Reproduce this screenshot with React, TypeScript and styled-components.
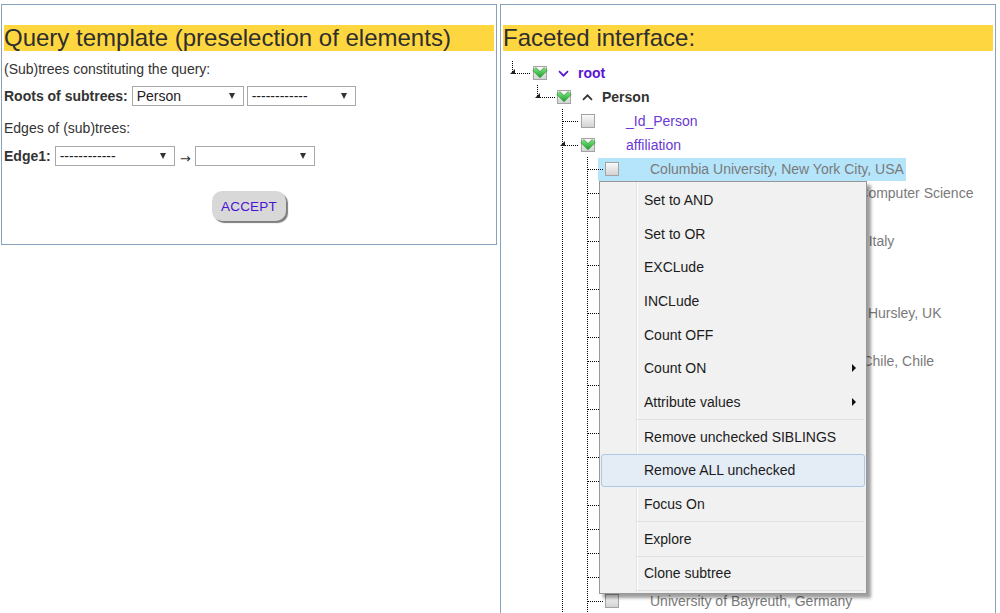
import React from "react";
import styled, { createGlobalStyle } from "styled-components";

const GlobalStyle = createGlobalStyle`
  html, body {
    margin: 0;
    padding: 0;
    overflow: hidden;
    background: #fff;
    font-family: "Liberation Sans", Arial, sans-serif;
  }
`;

const Page = styled.div`
  display: flex;
  align-items: flex-start;
  gap: 3px;
  padding: 4px 0 0 1px;
  width: 1000px;
  height: 613px;
  box-sizing: border-box;
  overflow: hidden;
`;

const Panel = styled.section<{ $h: number }>`
  position: relative;
  flex: none;
  width: 496px;
  height: ${(p) => p.$h}px;
  box-sizing: border-box;
  border: 1px solid #86a3bb;
  padding: 0 2px;
  color: #333;
  font-size: 14px;
`;

const Heading = styled.h2`
  margin: 20px 0 0;
  height: 26px;
  line-height: 26px;
  background: #fed63f;
  color: #2e2e2e;
  font-size: 24px;
  font-weight: normal;
  white-space: nowrap;
`;

const Para = styled.p<{ $mt: number }>`
  margin: ${(p) => p.$mt}px 0 0;
  line-height: 18px;
  font-size: 14px;
  color: #333;
`;

const FormRow = styled.div<{ $mt: number }>`
  display: flex;
  align-items: center;
  height: 20px;
  margin-top: ${(p) => p.$mt}px;
`;

const FieldLabel = styled.span`
  font-weight: bold;
  color: #333;
  margin-right: 4px;
  white-space: nowrap;
`;

const FakeSelect = styled.div<{ $w: number }>`
  display: flex;
  align-items: center;
  justify-content: space-between;
  box-sizing: border-box;
  width: ${(p) => p.$w}px;
  height: 20px;
  border: 1px solid #a9a9a9;
  padding: 0 8px 0 4px;
  margin-right: 3px;
  background: #fff;
  color: #222;
  font-size: 14px;
`;

const DownTriangle = styled.span`
  width: 0;
  height: 0;
  border-left: 3.5px solid transparent;
  border-right: 3.5px solid transparent;
  border-top: 6px solid #333;
`;

const EdgeArrow = styled.span`
  margin: 4px 4px 0 2px;
  font-family: "DejaVu Sans", sans-serif;
  font-size: 13px;
  color: #333;
`;

const ButtonRow = styled.div`
  display: flex;
  justify-content: center;
  margin-top: 25px;
`;

const AcceptButton = styled.button`
  width: 74px;
  height: 30px;
  border: none;
  border-radius: 10px;
  background: #d8d8d8;
  box-shadow: 2px 2px 1px #7d7d7d;
  color: #4a12d4;
  font-family: "Liberation Sans", Arial, sans-serif;
  font-size: 13.5px;
  letter-spacing: 0.2px;
  padding: 0;
`;

/* ---------- tree ---------- */

const Tree = styled.ul`
  margin: 10px 0 0;
  padding: 0 0 0 9px;
  list-style: none;
`;

const Children = styled.ul`
  margin: 0;
  padding: 0 0 0 25px;
  list-style: none;
`;

const Item = styled.li<{ $last: boolean }>`
  background-image: repeating-linear-gradient(to bottom, #000 0 1px, transparent 1px 2px);
  background-repeat: no-repeat;
  background-size: 1px ${(p) => (p.$last ? "12px" : "100%")};
  background-position: 0 0;
`;

const Row = styled.div`
  display: flex;
  align-items: center;
  height: 24px;
`;

const Connector = styled.span<{ $w: number }>`
  position: relative;
  flex: none;
  width: ${(p) => p.$w}px;
  height: 24px;
  background-image: repeating-linear-gradient(to right, #000 0 1px, transparent 1px 2px);
  background-repeat: no-repeat;
  background-size: ${(p) => p.$w - 2}px 1px;
  background-position: 1px 12px;
`;

const Expander = styled.span`
  position: absolute;
  left: -2px;
  top: 8px;
  width: 0;
  height: 0;
  border-style: solid;
  border-width: 0 0 5px 5px;
  border-color: transparent transparent #222 transparent;
`;

const NodeBody = styled.span<{ $active?: boolean }>`
  display: flex;
  align-items: center;
  height: 23px;
  margin-left: -6px;
  padding: 0 2px 0 6px;
  background: ${(p) => (p.$active ? "#b5e5fa" : "transparent")};
`;

const ChevronSlot = styled.span`
  flex: none;
  display: flex;
  align-items: center;
  width: 11px;
  margin: 0 9px 0 10px;
`;

const NodeText = styled.span<{ $tone: "root" | "attr" | "elem" | "value"; $bold?: boolean }>`
  white-space: nowrap;
  font-size: 14px;
  font-weight: ${(p) => (p.$bold ? "bold" : "normal")};
  color: ${(p) =>
    p.$tone === "root"
      ? "#5a14d2"
      : p.$tone === "attr"
      ? "#6a38d6"
      : p.$tone === "elem"
      ? "#333"
      : "#7a7a7a"};
`;

/* ---------- context menu ---------- */

const Menu = styled.div`
  position: absolute;
  left: 98px;
  top: 176px;
  width: 268px;
  height: 413px;
  box-sizing: border-box;
  border: 1px solid #979797;
  padding: 1px 0 2px;
  background:
    linear-gradient(to right, transparent 36px, #e3e3e3 36px, #e3e3e3 37px, #fff 37px, #fff 38px, transparent 38px),
    #f1f1f1;
  box-shadow: 4px 4px 3px rgba(0, 0, 0, 0.38);
  z-index: 5;
`;

const MenuItem = styled.div<{ $active?: boolean }>`
  display: flex;
  align-items: center;
  justify-content: space-between;
  box-sizing: border-box;
  height: 33.7px;
  padding: 0 10px 0 ${(p) => (p.$active ? "42px" : "44px")};
  margin: 0 ${(p) => (p.$active ? "1px" : "0")};
  border: ${(p) => (p.$active ? "1px solid #adc8e4" : "none")};
  border-radius: 3px;
  background: ${(p) => (p.$active ? "#e4ecf6" : "transparent")};
  color: #1b1b1b;
  font-size: 14px;
  white-space: nowrap;
`;

const SubArrow = styled.span`
  width: 0;
  height: 0;
  border-top: 4px solid transparent;
  border-bottom: 4px solid transparent;
  border-left: 4px solid #111;
`;

const Separator = styled.div`
  height: 1px;
  margin: 0 2px 0 37px;
  background: #e0e0e0;
`;

/* ---------- icons ---------- */

const CheckBox: React.FC<{ checked?: boolean }> = ({ checked }) => (
  <svg width="16" height="16" viewBox="0 0 16 16" style={{ flex: "none" }}>
    <defs>
      <linearGradient id="cbBg" x1="0" y1="0" x2="0" y2="1">
        <stop offset="0" stopColor="#fafafa" />
        <stop offset="1" stopColor="#d2d2d2" />
      </linearGradient>
      <linearGradient id="cbCheck" x1="0" y1="0" x2="0" y2="1">
        <stop offset="0" stopColor="#86e486" />
        <stop offset="1" stopColor="#14a028" />
      </linearGradient>
    </defs>
    <rect x="1.5" y="1.5" width="13" height="13" fill="url(#cbBg)" stroke="#a3a3a3" />
    {checked && (
      <path d="M0.8 5.6 L3.9 2.6 L8 6.6 L12.1 2.6 L15.2 5.6 L8 12.8 Z" fill="url(#cbCheck)" stroke="#1e8f2c" strokeWidth="0.6" />
    )}
  </svg>
);

const Chevron: React.FC<{ dir: "down" | "up"; color: string }> = ({ dir, color }) => (
  <svg width="11" height="7" viewBox="0 0 11 7">
    <polyline
      points={dir === "down" ? "1,1.2 5.5,5.7 10,1.2" : "1,5.8 5.5,1.3 10,5.8"}
      fill="none"
      stroke={color}
      strokeWidth="1.7"
    />
  </svg>
);

/* ---------- data ---------- */

const affiliations = [
  "Columbia University, New York City, USA",
  "Boston University, Department of Computer Science",
  "Stanford University, USA",
  "Università degli Studi di Camerino, Italy",
  "AT&T Bell Laboratories, USA",
  "University of Toronto, Canada",
  "IBM United Kingdom Laboratories, Hursley, UK",
  "Harvard University, USA",
  "Pontificia Universidad Católica de Chile, Chile",
  "Cornell University, USA",
  "University of Oxford, UK",
  "ETH Zurich, Switzerland",
  "INRIA, France",
  "University of Edinburgh, UK",
  "Purdue University, USA",
  "University of Waterloo, Canada",
  "MIT, Cambridge, USA",
  "University of Tokyo, Japan",
  "University of Bayreuth, Germany",
];

type MenuEntry = { label: string; sub?: boolean; active?: boolean } | "sep";

const menuEntries: MenuEntry[] = [
  { label: "Set to AND" },
  { label: "Set to OR" },
  { label: "EXCLude" },
  { label: "INCLude" },
  { label: "Count OFF" },
  { label: "Count ON", sub: true },
  { label: "Attribute values", sub: true },
  "sep",
  { label: "Remove unchecked SIBLINGS" },
  { label: "Remove ALL unchecked", active: true },
  { label: "Focus On" },
  "sep",
  { label: "Explore" },
  "sep",
  { label: "Clone subtree" },
  "sep",
];

const NodeRow: React.FC<{
  level: number;
  expanded?: boolean;
  checked?: boolean;
  active?: boolean;
  chevron?: React.ReactNode;
  children: React.ReactNode;
}> = ({ level, expanded, checked, active, chevron, children }) => (
  <Row>
    <Connector $w={20 - level}>{expanded && <Expander />}</Connector>
    <NodeBody $active={active}>
      <CheckBox checked={checked} />
      <ChevronSlot>{chevron}</ChevronSlot>
      {children}
    </NodeBody>
  </Row>
);

export default function App() {
  return (
    <>
      <GlobalStyle />
      <Page>
        <Panel $h={241}>
          <Heading>Query template (preselection of elements)</Heading>
          <Para $mt={9}>(Sub)trees constituting the query:</Para>
          <FormRow $mt={8}>
            <FieldLabel>Roots of subtrees:</FieldLabel>
            <FakeSelect $w={112}>
              <span>Person</span>
              <DownTriangle />
            </FakeSelect>
            <FakeSelect $w={109}>
              <span>------------</span>
              <DownTriangle />
            </FakeSelect>
          </FormRow>
          <Para $mt={13}>Edges of (sub)trees:</Para>
          <FormRow $mt={9}>
            <FieldLabel>Edge1:</FieldLabel>
            <FakeSelect $w={120}>
              <span>------------</span>
              <DownTriangle />
            </FakeSelect>
            <EdgeArrow>→</EdgeArrow>
            <FakeSelect $w={120}>
              <span />
              <DownTriangle />
            </FakeSelect>
          </FormRow>
          <ButtonRow>
            <AcceptButton>ACCEPT</AcceptButton>
          </ButtonRow>
        </Panel>

        <Panel $h={660}>
          <Heading>Faceted interface:</Heading>
          <Tree>
            <Item $last>
              <NodeRow level={0} expanded checked chevron={<Chevron dir="down" color="#5a14d2" />}>
                <NodeText $tone="root" $bold>root</NodeText>
              </NodeRow>
              <Children>
                <Item $last>
                  <NodeRow level={1} expanded checked chevron={<Chevron dir="up" color="#333" />}>
                    <NodeText $tone="elem" $bold>Person</NodeText>
                  </NodeRow>
                  <Children>
                    <Item $last={false}>
                      <NodeRow level={2}>
                        <NodeText $tone="attr">_Id_Person</NodeText>
                      </NodeRow>
                    </Item>
                    <Item $last={false}>
                      <NodeRow level={2} expanded checked>
                        <NodeText $tone="attr">affiliation</NodeText>
                      </NodeRow>
                      <Children>
                        {affiliations.map((a, i) => (
                          <Item key={a} $last={false}>
                            <NodeRow level={3} active={i === 0}>
                              <NodeText $tone="value">{a}</NodeText>
                            </NodeRow>
                          </Item>
                        ))}
                      </Children>
                    </Item>
                  </Children>
                </Item>
              </Children>
            </Item>
          </Tree>

          <Menu>
            {menuEntries.map((m, i) =>
              m === "sep" ? (
                <Separator key={`sep${i}`} />
              ) : (
                <MenuItem key={m.label} $active={m.active}>
                  <span>{m.label}</span>
                  {m.sub && <SubArrow />}
                </MenuItem>
              )
            )}
          </Menu>
        </Panel>
      </Page>
    </>
  );
}
